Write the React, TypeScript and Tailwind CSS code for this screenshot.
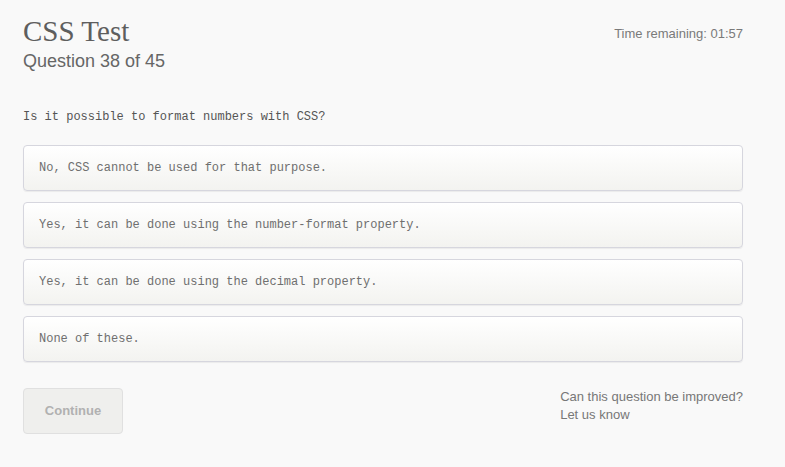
import { FC } from "react";

const options = [
    "No, CSS cannot be used for that purpose.",
    "Yes, it can be done using the number-format property.",
    "Yes, it can be done using the decimal property.",
    "None of these.",
];

const Option: FC<{ text: string }> = ({ text }) => (
    <div className="h-[46px] flex items-center px-[15px] rounded-[4px] border border-[#d6d6de] bg-gradient-to-b from-white to-[#f3f3f0] shadow-[0_1px_1px_rgba(0,0,0,0.06)] text-[12px] text-[#6f6f6f] font-['Liberation_Mono',monospace]">
        {text}
    </div>
);

const App: FC = () => {
    return (
        <div className="min-h-[467px] w-full bg-[#f9f9f9] font-['Liberation_Sans',Arial,sans-serif]">
            <div className="px-[23px] pt-[15px] w-[766px]">
                <div className="flex justify-between">
                    <div>
                        <h1 className="text-[29px] leading-[32px] text-[#5e5e5e] font-['Liberation_Serif',serif]">CSS Test</h1>
                        <div className="text-[18px] leading-[28px] text-[#666]">Question 38 of 45</div>
                    </div>
                    <div className="text-[13px] text-[#7a7a7a] pt-[9px]">Time remaining: 01:57</div>
                </div>

                <p className="mt-[33px] text-[12px] text-[#555] font-['Liberation_Mono',monospace]">Is it possible to format numbers with CSS?</p>

                <div className="mt-[19px] flex flex-col gap-[11px]">
                    {options.map(o => <Option key={o} text={o} />)}
                </div>

                <div className="mt-[26px] flex justify-between items-start">
                    <button className="w-[100px] h-[46px] rounded-[4px] border border-[#e0e0e0] bg-[#efefed] text-[13px] font-bold text-[#b1b1b1]">
                        Continue
                    </button>
                    <div className="text-[13px] leading-[18px] text-[#777]">
                        <div>Can this question be improved?</div>
                        <div>Let us know</div>
                    </div>
                </div>
            </div>
        </div>
    );
};

export default App;
